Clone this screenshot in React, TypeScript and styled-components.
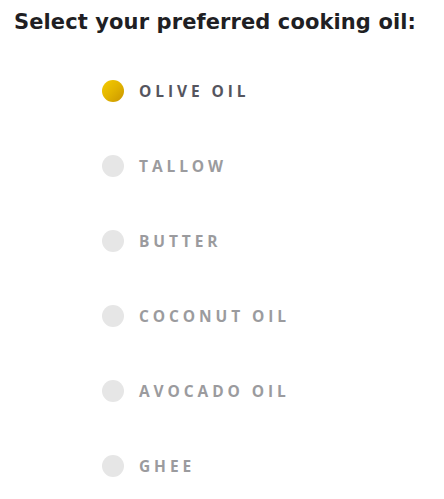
import React, { useState } from "react";
import styled, { createGlobalStyle } from "styled-components";

const Global = createGlobalStyle`
  html, body { margin: 0; padding: 0; background: #ffffff; }
  body { font-family: "Open Sans", "Noto Sans", sans-serif; }
`;

const Wrap = styled.div`
  padding: 7px 14px 0 14px;
`;

const Title = styled.h2`
  margin: 0;
  font-family: "DejaVu Sans", sans-serif;
  font-weight: 700;
  font-size: 21px;
  line-height: 30px;
  color: #1f1f24;
  letter-spacing: 0.1px;
  white-space: nowrap;
`;

const List = styled.div`
  display: flex;
  flex-direction: column;
  padding-left: 88px;
  margin-top: 43px;
  gap: 53px;
`;

const Option = styled.label`
  display: flex;
  align-items: center;
  gap: 15px;
  height: 22px;
  cursor: pointer;
`;

const Dot = styled.span<{ $active: boolean }>`
  width: 22px;
  height: 22px;
  border-radius: 50%;
  flex: none;
  background: ${(p) =>
    p.$active ? "linear-gradient(135deg, #f5cb00 0%, #e2b400 50%, #c99500 100%)" : "#e6e6e6"};
`;

const Label = styled.span<{ $active: boolean }>`
  font-family: "Open Sans", sans-serif;
  font-weight: 700;
  font-size: 15.5px;
  letter-spacing: 3.9px;
  text-transform: uppercase;
  color: ${(p) => (p.$active ? "#55555e" : "#9b9b9e")};
`;

const oils = ["Olive Oil", "Tallow", "Butter", "Coconut Oil", "Avocado Oil", "Ghee"];

export default function App() {
  const [sel, setSel] = useState(0);
  return (
    <Wrap>
      <Global />
      <Title>Select your preferred cooking oil:</Title>
      <List>
        {oils.map((o, i) => (
          <Option key={o} onClick={() => setSel(i)}>
            <Dot $active={sel === i} />
            <Label $active={sel === i}>{o}</Label>
          </Option>
        ))}
      </List>
    </Wrap>
  );
}
